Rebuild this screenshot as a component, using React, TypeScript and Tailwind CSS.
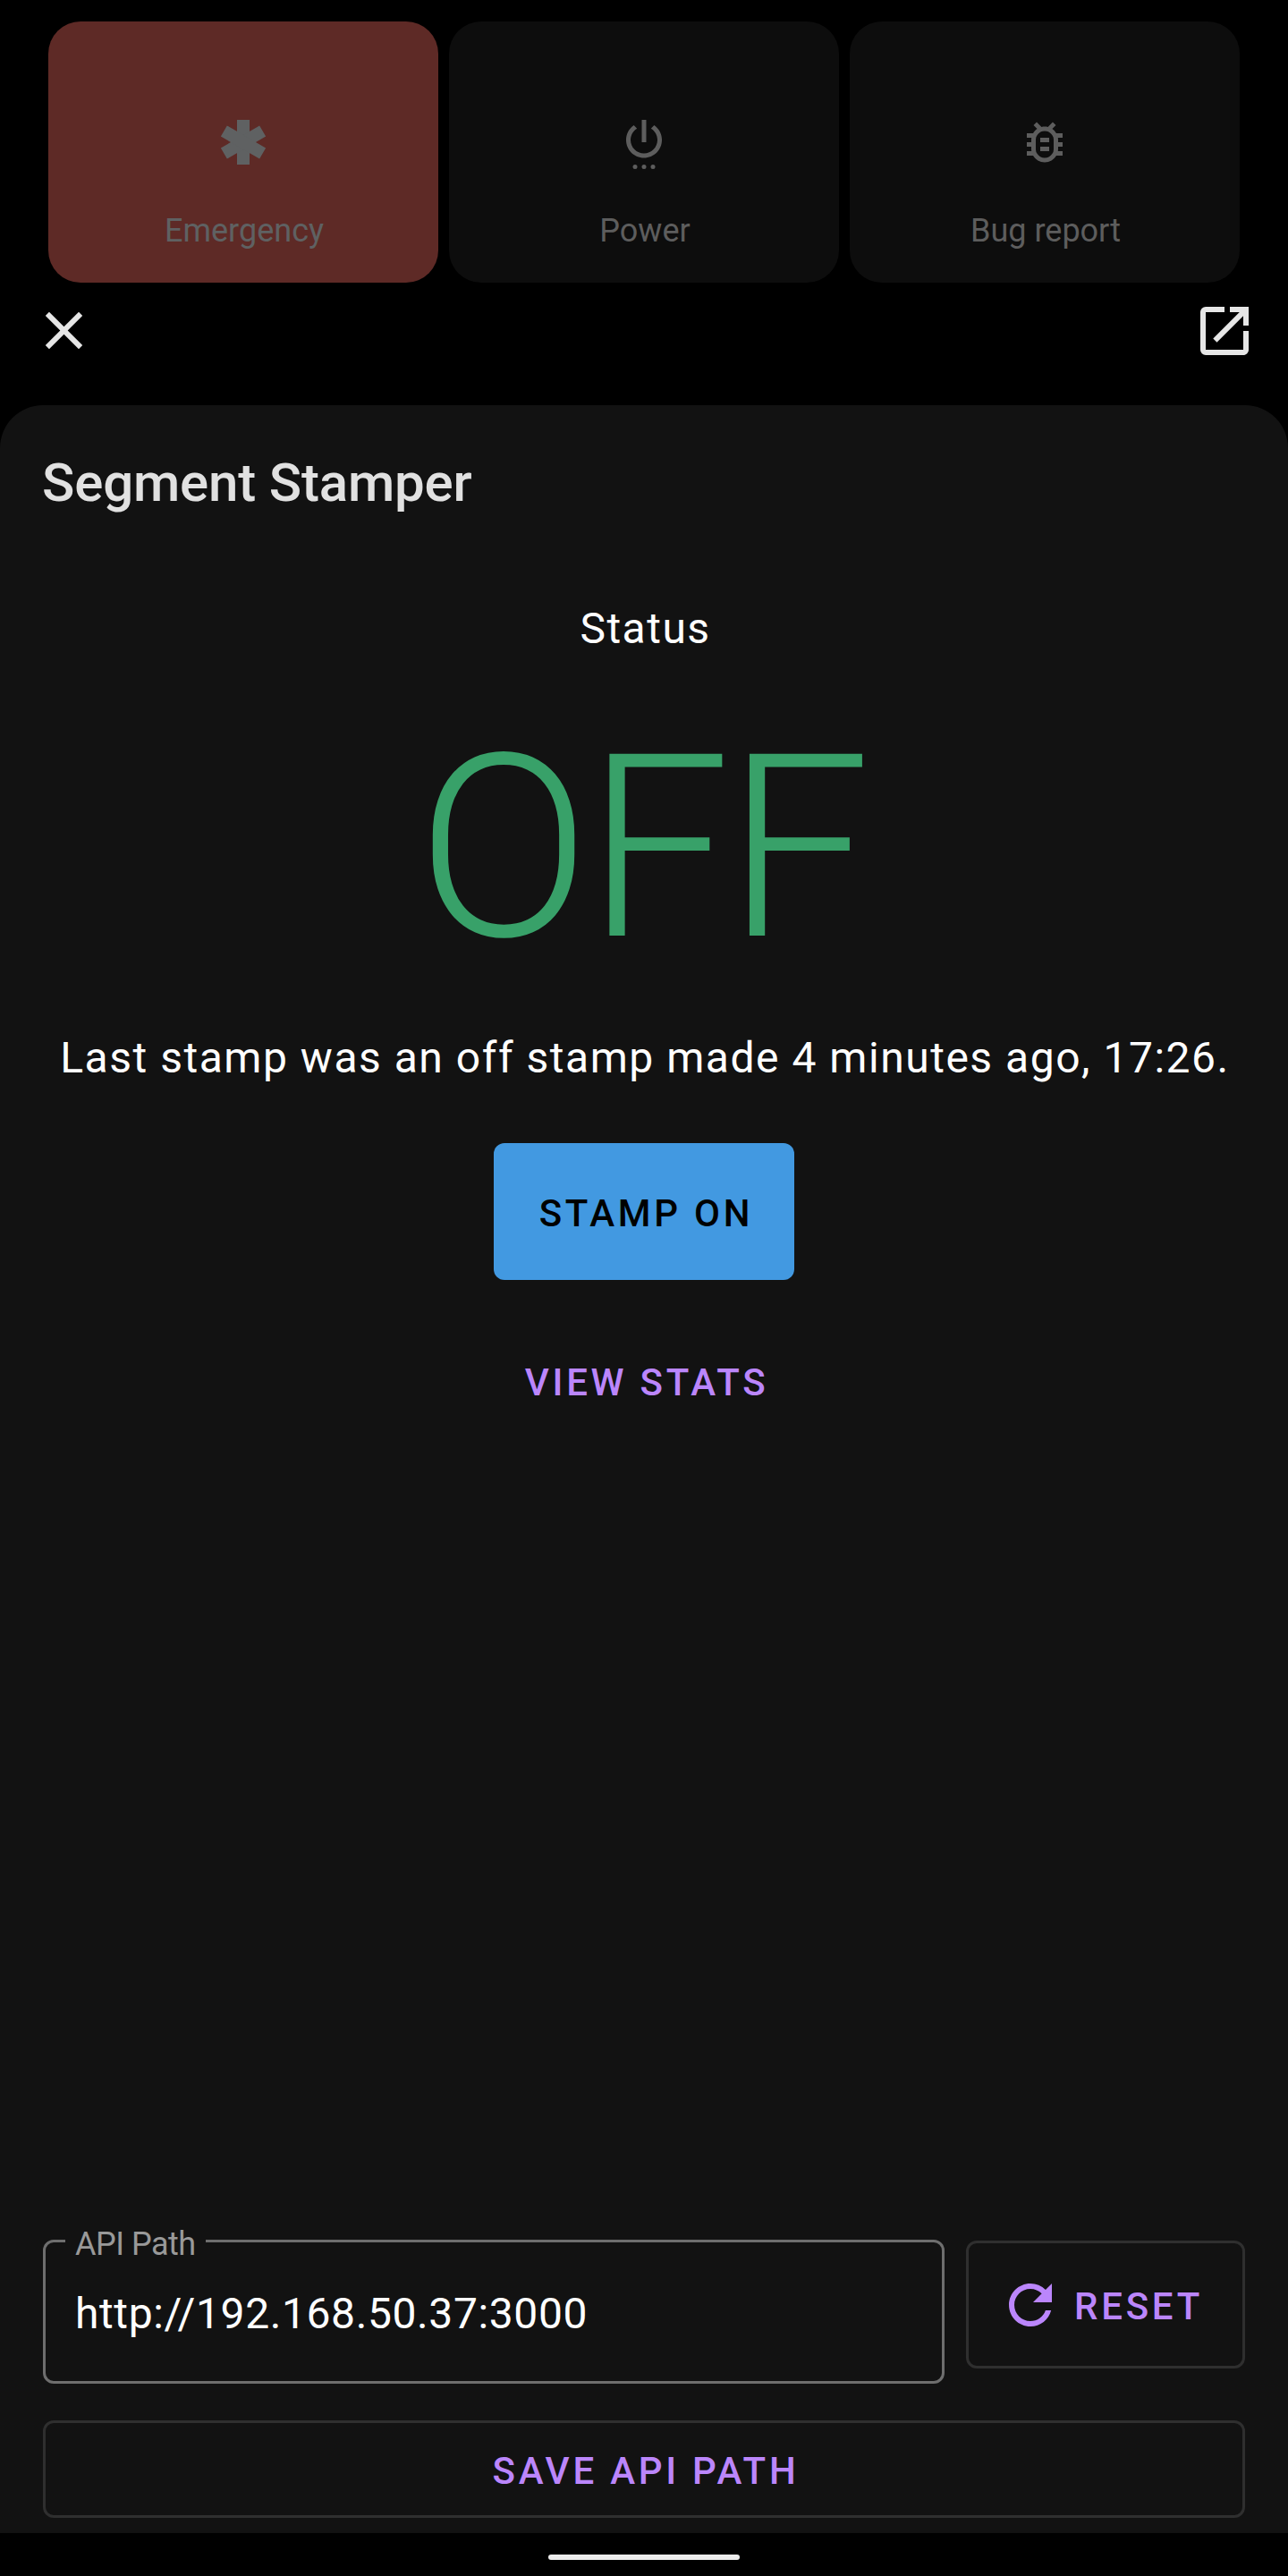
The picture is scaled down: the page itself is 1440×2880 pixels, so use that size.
import type { ReactNode } from "react";
import { MdClose, MdOpenInNew, MdOutlineBugReport, MdRefresh } from "react-icons/md";

function EmergencyIcon() {
  return (
    <svg viewBox="0 0 24 24" className="size-[60px]" fill="currentColor">
      {[0, 60, 120].map((angle) => (
        <rect key={angle} x="9.2" y="2" width="5.6" height="20" transform={`rotate(${angle} 12 12)`} />
      ))}
    </svg>
  );
}

function PowerIcon() {
  return (
    <svg viewBox="0 0 24 24" className="size-[60px]" fill="currentColor">
      <path d="M13 2h-2v10h2V2zm3.56 2.44l-1.45 1.45C16.84 6.94 18 8.83 18 11c0 3.31-2.69 6-6 6s-6-2.69-6-6c0-2.17 1.16-4.06 2.88-5.12L7.44 4.44C5.36 5.88 4 8.28 4 11c0 4.42 3.58 8 8 8s8-3.58 8-8c0-2.72-1.36-5.12-3.44-6.56z" />
      <circle cx="8" cy="23" r="1" />
      <circle cx="12" cy="23" r="1" />
      <circle cx="16" cy="23" r="1" />
    </svg>
  );
}

function PowerMenuCard({ icon, label, tone }: { icon: ReactNode; label: string; tone: string }) {
  return (
    <button className={`flex h-[292px] flex-col items-center rounded-[36px] pt-[105px] ${tone}`}>
      {icon}
      <span className="mt-[48px] pl-[2px] text-[36px] leading-[42px]">{label}</span>
    </button>
  );
}

export default function App() {
  return (
    <div className="flex h-[2880px] w-[1440px] flex-col bg-black font-['Roboto',sans-serif] text-white">
      <div className="grid grid-cols-3 gap-[12px] px-[54px] pt-[24px]">
        <PowerMenuCard icon={<EmergencyIcon />} label="Emergency" tone="bg-[#5e2a26] text-[#5f6162]" />
        <PowerMenuCard icon={<PowerIcon />} label="Power" tone="bg-[#0d0d0d] text-[#5d5d5d]" />
        <PowerMenuCard
          icon={<MdOutlineBugReport className="size-[60px]" />}
          label="Bug report"
          tone="bg-[#0d0d0d] text-[#5d5d5d]"
        />
      </div>

      <div className="flex h-[137px] items-start justify-between pr-[35px] pl-[36px] pt-[18px] text-[#e6e6e6]">
        <button aria-label="Close">
          <MdClose className="size-[71px]" />
        </button>
        <button aria-label="Open in app">
          <MdOpenInNew className="size-[72px]" />
        </button>
      </div>

      <main className="flex h-[2379px] flex-col rounded-t-[48px] bg-[#121212] px-[48px] pt-[52px] pb-[17px]">
        <h1 className="-ml-px text-[60px] leading-[70px] font-medium tracking-[-0.17px] text-[#e1e1e1]">
          Segment Stamper
        </h1>

        <div className="mt-[100px] flex flex-col items-center whitespace-nowrap">
          <p className="pl-[3px] text-[48px] leading-[56px] tracking-[1.5px]">Status</p>
          <p className="mt-[74px] mr-[5px] text-[286px] leading-[288px] font-light tracking-[-4.3px] text-[#38a169]">
            OFF
          </p>
          <p className="mt-[62px] pl-[2px] text-[48px] leading-[56px] tracking-[1.52px]">
            Last stamp was an off stamp made 4 minutes ago, 17:26.
          </p>
          <button className="mt-[67px] flex h-[153px] w-[336px] items-center justify-center rounded-[12px] bg-[#4299e1] pt-[4px] pl-[5px] text-[42px] font-medium tracking-[3.75px] text-black">
            STAMP ON
          </button>
          <button className="mt-[90px] pl-[6px] text-[42px] leading-[50px] font-medium tracking-[3.75px] text-[#bb86fc]">
            VIEW STATS
          </button>
        </div>

        <div className="mt-auto flex items-start gap-[24px]">
          <div className="relative flex h-[161px] w-[1008px] items-center rounded-[12px] border-[3px] border-[#6e6e6e] pl-[33px]">
            <span className="absolute -top-[19px] left-[22px] w-[157px] bg-[#121212] pl-[11px] text-[36px] leading-[42px] tracking-[-0.5px] text-[#999999]">
              API Path
            </span>
            <span className="mt-[5px] text-[48px] leading-[56px] tracking-[0.6px]">http://192.168.50.37:3000</span>
          </div>
          <button className="mt-px flex h-[143px] w-[312px] items-center rounded-[12px] border-[3px] border-[#2f2f2f] pl-[33px] text-[#bb86fc]">
            <MdRefresh className="size-[72px]" />
            <span className="ml-[13px] pt-[4px] text-[42px] font-medium tracking-[3.75px]">RESET</span>
          </button>
        </div>
        <button className="mt-[41px] flex h-[109px] items-center justify-center rounded-[12px] border-[3px] border-[#2f2f2f] pt-[4px] pl-[4px] text-[42px] font-medium tracking-[3.75px] text-[#bb86fc]">
          SAVE API PATH
        </button>
      </main>

      <div className="flex h-[48px] justify-center pt-[24px]">
        <div className="h-[6px] w-[214px] rounded-full bg-[#ececec]" />
      </div>
    </div>
  );
}
